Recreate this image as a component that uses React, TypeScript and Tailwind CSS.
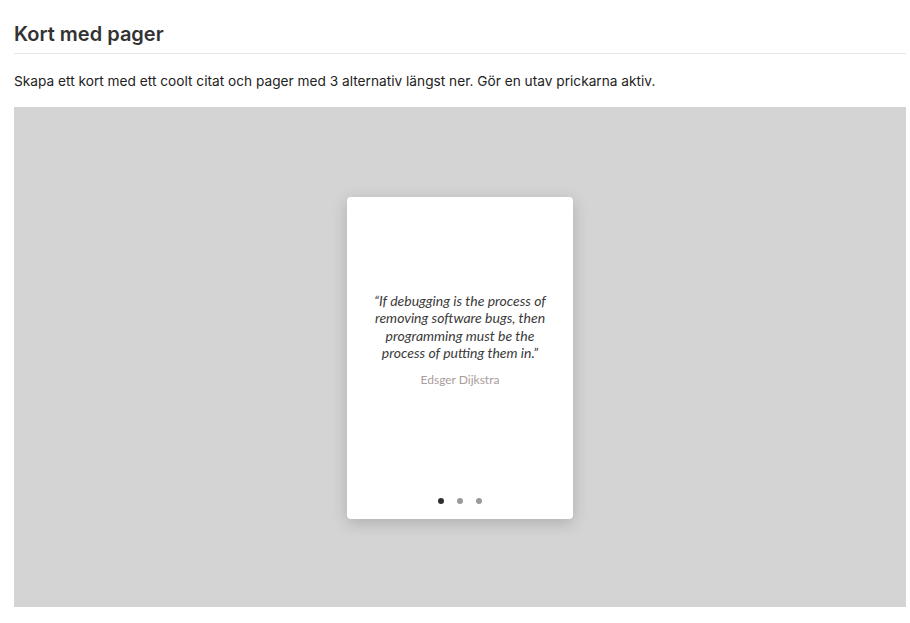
export default function App() {
  return (
    <div className="min-h-[623px] bg-white pl-[14px] pr-[4px] pt-[22px] font-['Inter',sans-serif] text-[#333]">
      <h2 className="border-b border-[#e6e6e6] pb-[7px] text-[20px] leading-[24px] font-semibold text-[#333]">
        Kort med pager
      </h2>
      <p className="mt-[18px] text-[13.7px] leading-[18px] text-[#222]">
        Skapa ett kort med ett coolt citat och pager med 3 alternativ längst ner. Gör en utav prickarna aktiv.
      </p>
      <div className="mt-[17px] flex h-[500px] items-center justify-center bg-[#d4d4d4] pt-[2px]">
        <div className="flex h-[322px] w-[226px] flex-col rounded-[4px] bg-white shadow-[0_4px_16px_rgba(0,0,0,0.18)]">
          <div className="flex flex-1 flex-col items-center justify-center px-[22px] pt-[2px] text-center">
            <p className="font-['Lato',sans-serif] text-[14px] leading-[17.3px] italic text-[#3a3a3a]">
              “If debugging is the process of removing software bugs, then programming must be the process of putting them in.”
            </p>
            <p className="mt-[11px] font-['Lato',sans-serif] text-[12px] leading-[15px] text-[#a99c9c]">
              Edsger Dijkstra
            </p>
          </div>
          <div className="flex h-[39px] items-start justify-center gap-[13px] pt-[18px]">
            <span className="h-[6px] w-[6px] rounded-full bg-[#2e2e2e]" />
            <span className="h-[6px] w-[6px] rounded-full bg-[#9a9a9a]" />
            <span className="h-[6px] w-[6px] rounded-full bg-[#9a9a9a]" />
          </div>
        </div>
      </div>
    </div>
  );
}
